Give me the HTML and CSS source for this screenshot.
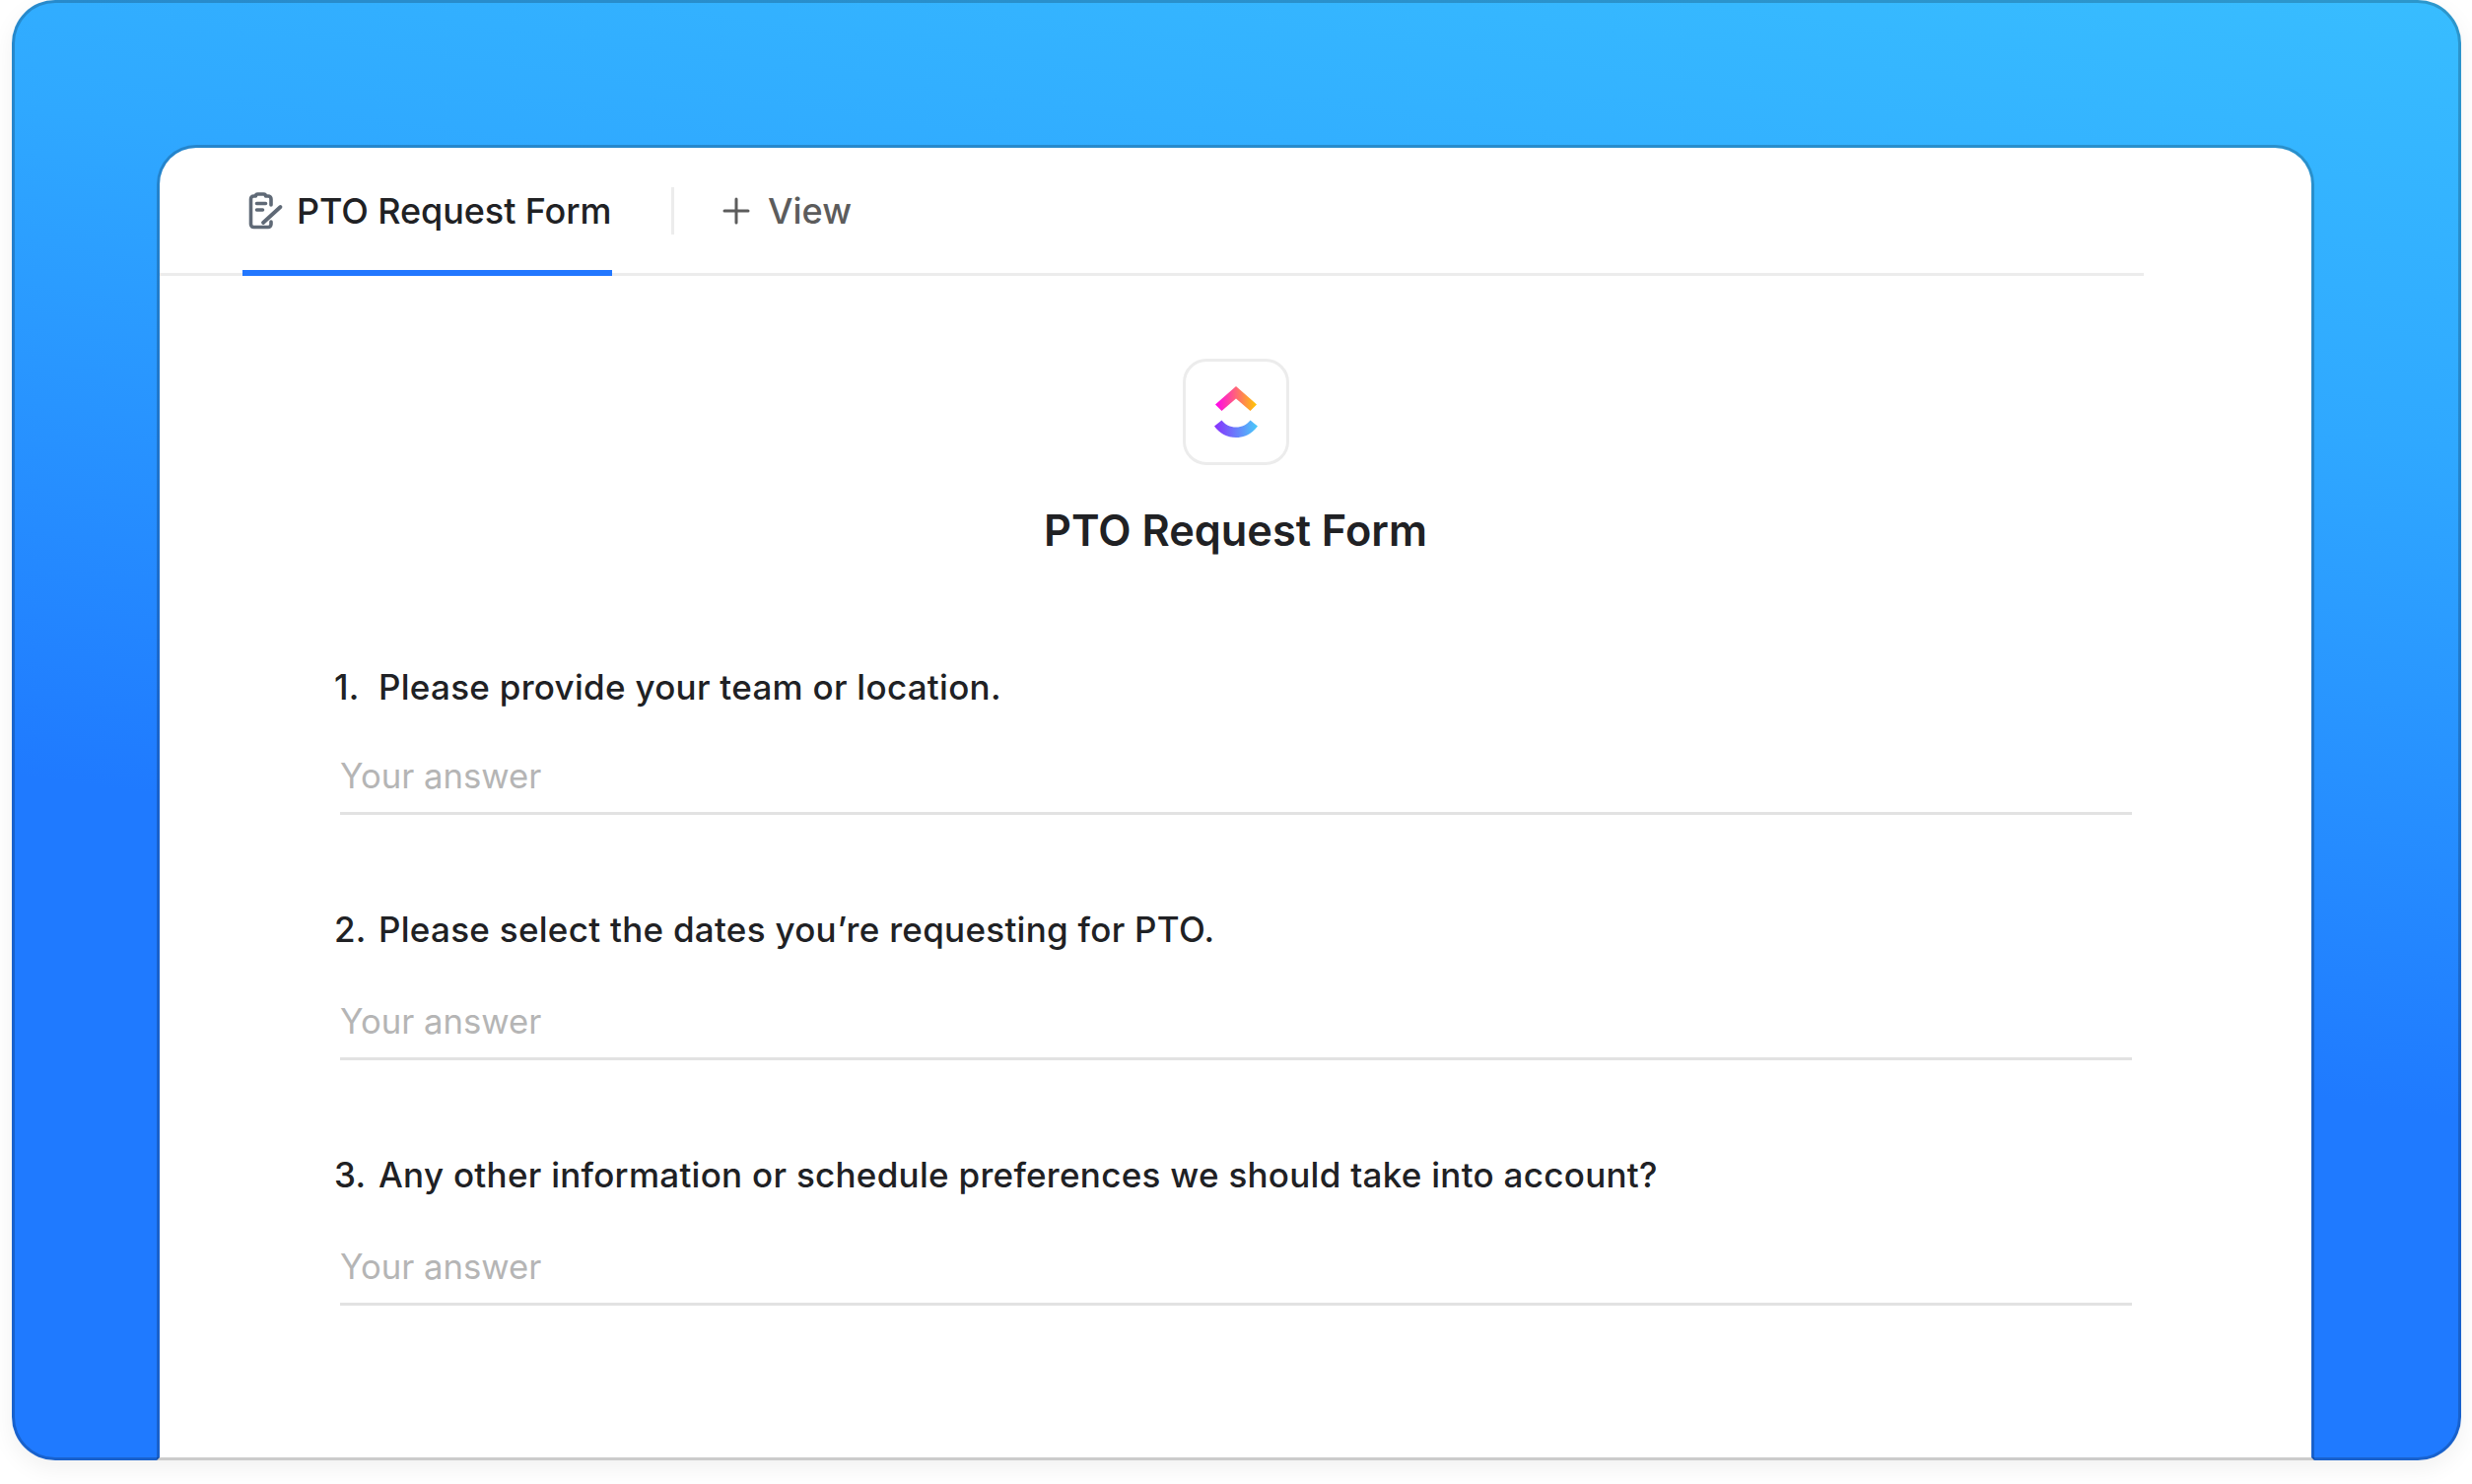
FILE: index.html
```html
<!DOCTYPE html>
<html>

<head>
    <meta name="viewport" content="width=device-width, initial-scale=1.0">
    <link rel="stylesheet" href="styles.css">
</head>

<body>
    <div class="frame">
        <div class="sheet">
            <div class="tabs">
                <div class="tab active">
                    <svg class="tab-icon" viewBox="0 0 36 38" fill="none" stroke="#5f6976" stroke-linecap="round" stroke-linejoin="round">
                        <path d="M23 30v2.500a3 3 0 0 1-3 3H5.500a3 3 0 0 1-3-3V7a3 3 0 0 1 3-3H7.500a2 2 0 0 1 2-2h6a2 2 0 0 1 2 2H20a3 3 0 0 1 3 3v6" stroke-width="3.600"/>
                        <path d="M8.500 11.500h9M8.500 18h6" stroke-width="3.600"/>
                        <path d="M15 31 32.500 15" stroke-width="3.800"/>
                    </svg>
                    <span>PTO Request Form</span>
                </div>
                <div class="divider"></div>
                <div class="tab add">
                    <svg class="plus" viewBox="0 0 28 28" fill="none" stroke="#5c5c5c" stroke-width="3" stroke-linecap="round">
                        <path d="M14 2v24M2 14h24"/>
                    </svg>
                    <span>View</span>
                </div>
            </div>

            <div class="form">
                <div class="logo-box">
                    <svg class="logo" viewBox="0 0 46 54">
                        <defs>
                            <linearGradient id="top" x1="0" y1="0" x2="1" y2="0">
                                <stop offset="0" stop-color="#ff02f0"/>
                                <stop offset="1" stop-color="#ffc800"/>
                            </linearGradient>
                            <linearGradient id="bottom" x1="0" y1="0" x2="1" y2="0">
                                <stop offset="0" stop-color="#8930fd"/>
                                <stop offset="1" stop-color="#49ccf9"/>
                            </linearGradient>
                        </defs>
                        <path fill="url(#top)" d="M23 1 44 19.500 37.500 26 23 13.500 8.500 26 2 19.500Z"/>
                        <path fill="url(#bottom)" d="M1 41.500 8.500 35.500C12 40 17 42.500 23 42.500S34 40 37.500 35.500L45 41.500C40 48.500 32 53 23 53S6 48.500 1 41.500Z"/>
                    </svg>
                </div>
                <h1 class="title">PTO Request Form</h1>

                <div class="question first">
                    <p class="label"><span class="num">1.</span>Please provide your team or location.</p>
                    <div class="answer">Your answer</div>
                </div>
                <div class="question">
                    <p class="label"><span class="num">2.</span>Please select the dates you’re requesting for PTO.</p>
                    <div class="answer">Your answer</div>
                </div>
                <div class="question">
                    <p class="label"><span class="num">3.</span>Any other information or schedule preferences we should take into account?</p>
                    <div class="answer">Your answer</div>
                </div>
            </div>
        </div>
    </div>
</body>

</html>
```

FILE: styles.css
```css
html,
body {
    margin: 0;
    height: 100%;
    background-color: white;
}

body {
    padding: 0 11px 24px 12px;
    box-sizing: border-box;
    font-family: "Inter", "Liberation Sans", sans-serif;
    color: #202124;
}

.frame {
    height: 100%;
    box-sizing: border-box;
    padding: 144px 146px 0 144px;
    border: 3px solid rgba(0, 0, 0, 0.2);
    border-radius: 44px;
    background: linear-gradient(188deg, #38bdff 0%, #2fa8ff 25%, #1f7aff 62%, #1f7aff 100%) border-box;
    box-shadow: 0 8px 24px rgba(0, 0, 0, 0.06);
}

.sheet {
    height: calc(100% + 3px);
    box-sizing: border-box;
    border: 3px solid rgba(0, 0, 0, 0.2);
    border-bottom: 3px solid #cbcbcb;
    border-radius: 40px 40px 0 0;
    background: white padding-box;
}

.tabs {
    display: flex;
    align-items: center;
    width: 2013px;
    height: 130px;
    box-sizing: border-box;
    padding-left: 84px;
    border-bottom: 3px solid #ececec;
}

.tab {
    display: flex;
    align-items: center;
    height: 130px;
    box-sizing: border-box;
    font-size: 36px;
    font-weight: 500;
    margin-bottom: -3px;
    white-space: nowrap;
}

.active {
    width: 375px;
    padding-left: 6px;
    gap: 13px;
    border-bottom: 6px solid #2277ff;
    padding-top: 4px;
    letter-spacing: -0.1px;
}

.tab-icon {
    width: 36px;
    height: 38px;
}

.divider {
    width: 3px;
    height: 48px;
    margin: 0 0 0 60px;
    background-color: #ececec;
}

.add {
    margin-left: 49px;
    gap: 18px;
    color: #5c5c5c;
    padding-bottom: 3px;
}

.plus {
    width: 28px;
    height: 28px;
}

.form {
    display: flex;
    flex-direction: column;
    align-items: center;
    padding-top: 84px;
}

.logo-box {
    display: flex;
    align-items: center;
    justify-content: center;
    width: 108px;
    height: 108px;
    box-sizing: border-box;
    border: 3px solid #ececec;
    border-radius: 24px;
}

.logo {
    width: 46px;
    height: 54px;
}

.title {
    margin: 39px 0 0;
    font-size: 43.300px;
    font-weight: 600;
    line-height: 54px;
}

.question {
    align-self: flex-start;
    width: 1818px;
    margin: 94px 0 0 183px;
}

.first {
    margin-top: 110px;
}

.label {
    display: flex;
    margin: 0;
    font-size: 35px;
    font-weight: 500;
    line-height: 44px;
    letter-spacing: 0.28px;
}

.num {
    width: 45px;
    margin-left: -6px;
    text-align: left;
}

.answer {
    margin-top: 49px;
    padding-bottom: 15px;
    font-size: 34.700px;
    line-height: 44px;
    color: #b5b5b5;
    border-bottom: 3px solid #e2e2e2;
}

.first .answer {
    margin-top: 46px;
}
```
